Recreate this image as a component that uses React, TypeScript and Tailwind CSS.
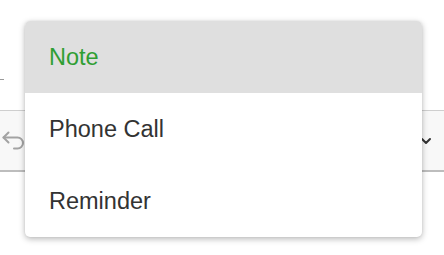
import { ChevronDown } from "lucide-react";

const items = [
  { label: "Note", active: true },
  { label: "Phone Call", active: false },
  { label: "Reminder", active: false },
];

function UndoIcon() {
  return (
    <svg width="24" height="22" viewBox="0 0 24 22" fill="none" stroke="#a3a3a3" strokeWidth="2" strokeLinecap="round" strokeLinejoin="round">
      <path d="M7.5 2.5 L2.5 7.5 L7.5 12.5" />
      <path d="M2.5 7.5 H16.5 A5.5 5.5 0 0 1 16.5 18.5 H13" />
    </svg>
  );
}

export default function App() {
  return (
    <div className="relative h-[255px] w-[444px] overflow-hidden bg-white font-['Liberation_Sans',Arial,sans-serif]">
      <div className="h-[79px]" />
      <div className="h-[1px] w-[4px] bg-[#9a9a9a]" />
      <div className="h-[30px]" />
      <div className="flex h-[62px] items-center justify-between border-t border-b-2 border-t-[#cfcfcf] border-b-[#bdbdbd] bg-[#f8f8f8] pl-[1px] pr-[10px]">
        <UndoIcon />
        <ChevronDown size={16} strokeWidth={3} className="text-[#333]" />
      </div>

      <div className="absolute left-[25px] top-[21px] w-[397px] overflow-hidden rounded-[5px] bg-white shadow-[0_2px_6px_rgba(0,0,0,0.28),0_0_2px_rgba(0,0,0,0.08)]">
        {items.map((item) => (
          <div
            key={item.label}
            className={
              item.active
                ? "flex h-[72px] items-center bg-[#dfdfdf] pl-[24px] pt-[2px] text-[23.5px] text-[#2f9e33]"
                : "flex h-[72px] items-center pl-[24px] pt-[2px] text-[23.5px] text-[#333333]"
            }
          >
            {item.label}
          </div>
        ))}
      </div>
    </div>
  );
}
